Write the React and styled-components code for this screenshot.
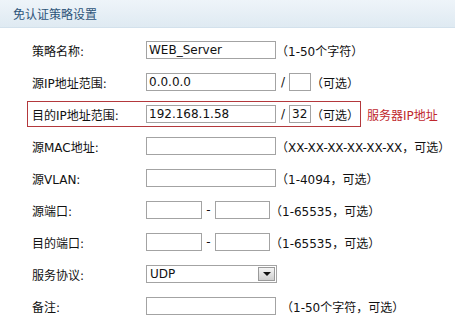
import styled, { createGlobalStyle } from "styled-components";

const GlobalStyle = createGlobalStyle`
  html, body {
    margin: 0;
    padding: 0;
    background: #ffffff;
  }
  body {
    font-family: "DejaVu Sans", "Noto Sans CJK SC", sans-serif;
    font-size: 12px;
    color: #111;
  }
`;

const Page = styled.div`
  width: 455px;
  height: 316px;
  overflow: hidden;
`;

const Header = styled.div`
  height: 27px;
  display: flex;
  align-items: center;
  padding-left: 13px;
  background: linear-gradient(#eef4f9, #dfeaf2);
  border-bottom: 1px solid #d3e1ec;
`;

const Title = styled.span`
  color: #2d5479;
  font-size: 12px;
`;

const Form = styled.div`
  padding-top: 6px;
  display: flex;
  flex-direction: column;
`;

const Row = styled.div`
  height: 32px;
  display: flex;
  align-items: center;
  padding-left: 27px;
  white-space: nowrap;
`;

const Highlight = styled.div`
  display: flex;
  align-items: center;
  height: 24px;
  padding: 0 1px 0 4px;
  border: 1px solid #b3383c;
`;

const Label = styled.span`
  width: 114px;
  padding-left: ${(p) => (p.$boxed ? 0 : 5)}px;
  flex: none;
`;

const TextBox = styled.input`
  box-sizing: border-box;
  width: ${(p) => p.$w || 130}px;
  height: 18px;
  margin: 0;
  padding: 0 2px;
  border: 1px solid #a3a3a3;
  font: inherit;
  font-size: 12px;
  color: #111;
  background: #fff;
  outline: none;
`;

const Hint = styled.span`
  margin-left: ${(p) => p.$gap || 0}px;
`;

const Slash = styled.span`
  padding: 0 4px 0 5px;
`;

const Dash = styled.span`
  width: 13px;
  text-align: center;
`;

const Note = styled.span`
  margin-left: 6px;
  color: #c0272d;
`;

const Select = styled.div`
  box-sizing: border-box;
  width: 131px;
  height: 18px;
  border: 1px solid #a3a3a3;
  display: flex;
  align-items: center;
  justify-content: space-between;
  padding: 0 1px 0 3px;
`;

const DropButton = styled.div`
  box-sizing: border-box;
  width: 17px;
  height: 14px;
  border: 1px solid #9a9a9a;
  background: linear-gradient(#f4f4f4, #cfcfcf);
  display: flex;
  align-items: center;
  justify-content: center;
`;

const Arrow = styled.span`
  width: 0;
  height: 0;
  border-left: 4px solid transparent;
  border-right: 4px solid transparent;
  border-top: 4px solid #111;
`;

const App = () => {
  return (
    <Page>
      <GlobalStyle />
      <Header>
        <Title>免认证策略设置</Title>
      </Header>
      <Form>
        <Row>
          <Label>策略名称:</Label>
          <TextBox readOnly defaultValue="WEB_Server" />
          <Hint>（1-50个字符）</Hint>
        </Row>
        <Row>
          <Label>源IP地址范围:</Label>
          <TextBox readOnly defaultValue="0.0.0.0" />
          <Slash>/</Slash>
          <TextBox readOnly $w={22} />
          <Hint>（可选）</Hint>
        </Row>
        <Row>
          <Highlight>
            <Label $boxed>目的IP地址范围:</Label>
            <TextBox readOnly defaultValue="192.168.1.58" />
            <Slash>/</Slash>
            <TextBox readOnly $w={22} defaultValue="32" />
            <Hint>（可选）</Hint>
          </Highlight>
          <Note>服务器IP地址</Note>
        </Row>
        <Row>
          <Label>源MAC地址:</Label>
          <TextBox readOnly />
          <Hint>（XX-XX-XX-XX-XX-XX，可选）</Hint>
        </Row>
        <Row>
          <Label>源VLAN:</Label>
          <TextBox readOnly />
          <Hint>（1-4094，可选）</Hint>
        </Row>
        <Row>
          <Label>源端口:</Label>
          <TextBox readOnly $w={56} />
          <Dash>-</Dash>
          <TextBox readOnly $w={55} />
          <Hint>（1-65535，可选）</Hint>
        </Row>
        <Row>
          <Label>目的端口:</Label>
          <TextBox readOnly $w={56} />
          <Dash>-</Dash>
          <TextBox readOnly $w={55} />
          <Hint>（1-65535，可选）</Hint>
        </Row>
        <Row>
          <Label>服务协议:</Label>
          <Select>
            <span>UDP</span>
            <DropButton>
              <Arrow />
            </DropButton>
          </Select>
        </Row>
        <Row>
          <Label>备注:</Label>
          <TextBox readOnly />
          <Hint $gap={5}>（1-50个字符，可选）</Hint>
        </Row>
      </Form>
    </Page>
  );
};

export default App;
